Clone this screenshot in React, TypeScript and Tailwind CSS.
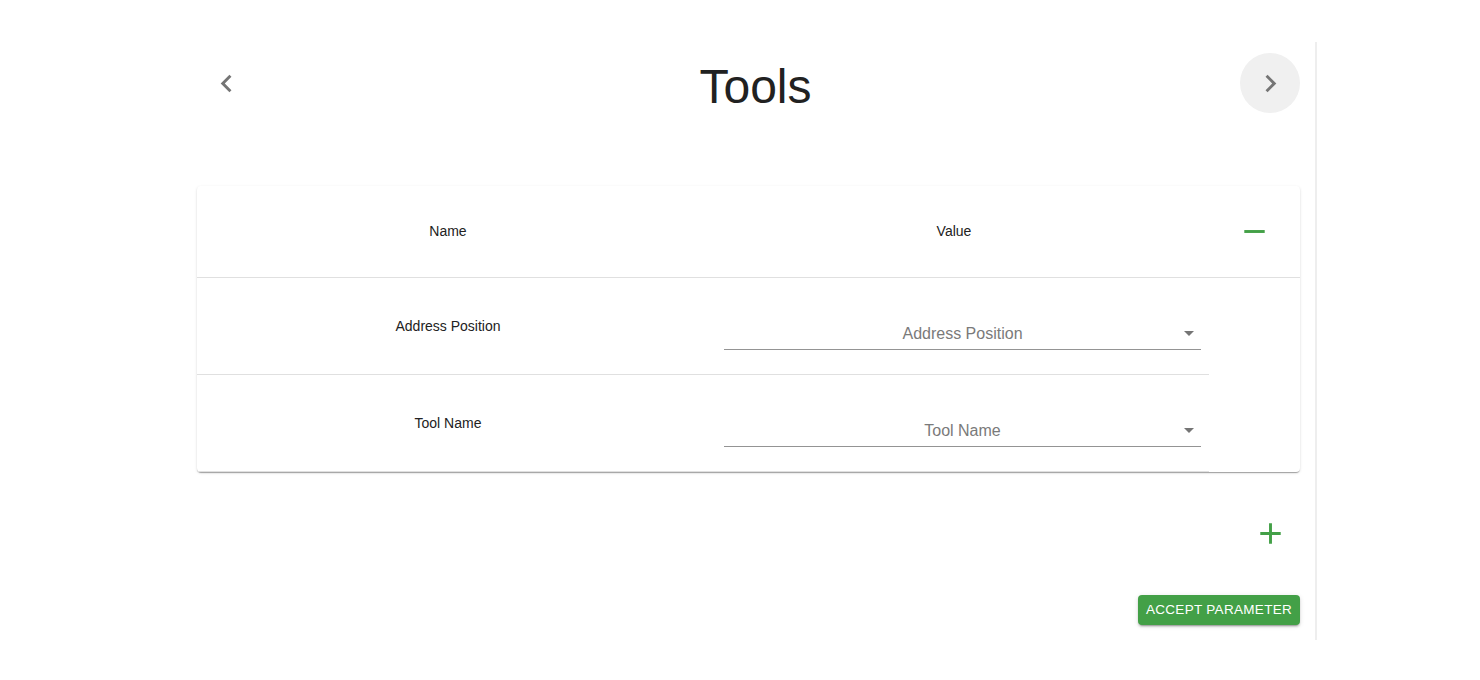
import React from "react";

const ChevronLeft = () => (
  <svg viewBox="0 0 24 24" width="35" height="35" fill="#757575">
    <path d="M15.41 7.41 14 6l-6 6 6 6 1.41-1.41L10.83 12z" />
  </svg>
);
const ChevronRight = () => (
  <svg viewBox="0 0 24 24" width="35" height="35" fill="#757575">
    <path d="M10 6 8.59 7.41 13.17 12l-4.58 4.59L10 18l6-6z" />
  </svg>
);
const Remove = () => (
  <svg viewBox="0 0 24 24" width="35" height="35" fill="#43a047">
    <path d="M19 13H5v-2h14v2z" />
  </svg>
);
const Add = () => (
  <svg viewBox="0 0 24 24" width="35" height="35" fill="#43a047">
    <path d="M19 13h-6v6h-2v-6H5v-2h6V5h2v6h6v2z" />
  </svg>
);
const ArrowDrop = () => (
  <svg viewBox="0 0 24 24" width="24" height="24" fill="#757575">
    <path d="M7 10l5 5 5-5z" />
  </svg>
);

function SelectField({ label }: { label: string }) {
  return (
    <div className="relative mt-[14px] flex h-[33px] w-full items-center border-b border-[#949494] pt-[2px]">
      <div className="w-full text-center text-[16px] leading-[19px] text-[#7a7a7a]">{label}</div>
      <div className="absolute right-0 top-[4px]">
        <ArrowDrop />
      </div>
    </div>
  );
}

function Row({ name }: { name: string }) {
  return (
    <div className="flex h-[97px] w-[1012px] border-b border-[#e0e0e0]">
      <div className="flex w-[502px] items-center justify-center text-[14px] text-[#222222]">{name}</div>
      <div className="flex w-[510px] items-center pl-[25px] pr-[8px]">
        <SelectField label={name} />
      </div>
    </div>
  );
}

export default function App() {
  return (
    <div className="flex min-h-[680px] bg-white pt-[42px] font-['Liberation_Sans',Arial,sans-serif]">
      <div className="ml-[197px] flex w-[1103px] flex-col">
        <div className="flex items-start">
          <button className="mt-[11px] flex h-[60px] w-[59px] items-center justify-center rounded-full">
            <ChevronLeft />
          </button>
          <div className="mt-[21px] flex-1 pl-[15px] text-center text-[48px] leading-none text-[#212121]">
            Tools
          </div>
          <button className="mt-[11px] flex h-[60px] w-[60px] items-center justify-center rounded-full bg-[#f0f0f0]">
            <ChevronRight />
          </button>
        </div>

        <div className="mt-[73px] rounded-[4px] bg-white shadow-[0px_2px_1px_-1px_rgba(0,0,0,0.2),0px_1px_1px_0px_rgba(0,0,0,0.14),0px_1px_3px_0px_rgba(0,0,0,0.12)]">
          <div className="flex h-[92px] border-b border-[#e0e0e0] text-[14px] text-[#222222]">
            <div className="flex w-[502px] items-center justify-center">Name</div>
            <div className="flex w-[510px] items-center justify-center">Value</div>
            <div className="flex flex-1 items-center justify-center">
              <Remove />
            </div>
          </div>
          <Row name="Address Position" />
          <Row name="Tool Name" />
        </div>

        <div className="mt-[31px] flex justify-end">
          <button className="flex h-[60px] w-[60px] items-center justify-center rounded-full">
            <Add />
          </button>
        </div>

        <div className="mt-[32px] flex justify-end">
          <button className="flex h-[30px] w-[162px] items-center justify-center rounded-[4px] bg-[#43a047] text-[13.5px] font-medium tracking-[0.3px] text-white shadow-[0px_3px_1px_-2px_rgba(0,0,0,0.2),0px_2px_2px_0px_rgba(0,0,0,0.14),0px_1px_5px_0px_rgba(0,0,0,0.12)]">
            ACCEPT PARAMETER
          </button>
        </div>
      </div>
      <div className="ml-[15px] h-[598px] w-[2px] bg-[#eeeeee]" />
    </div>
  );
}
